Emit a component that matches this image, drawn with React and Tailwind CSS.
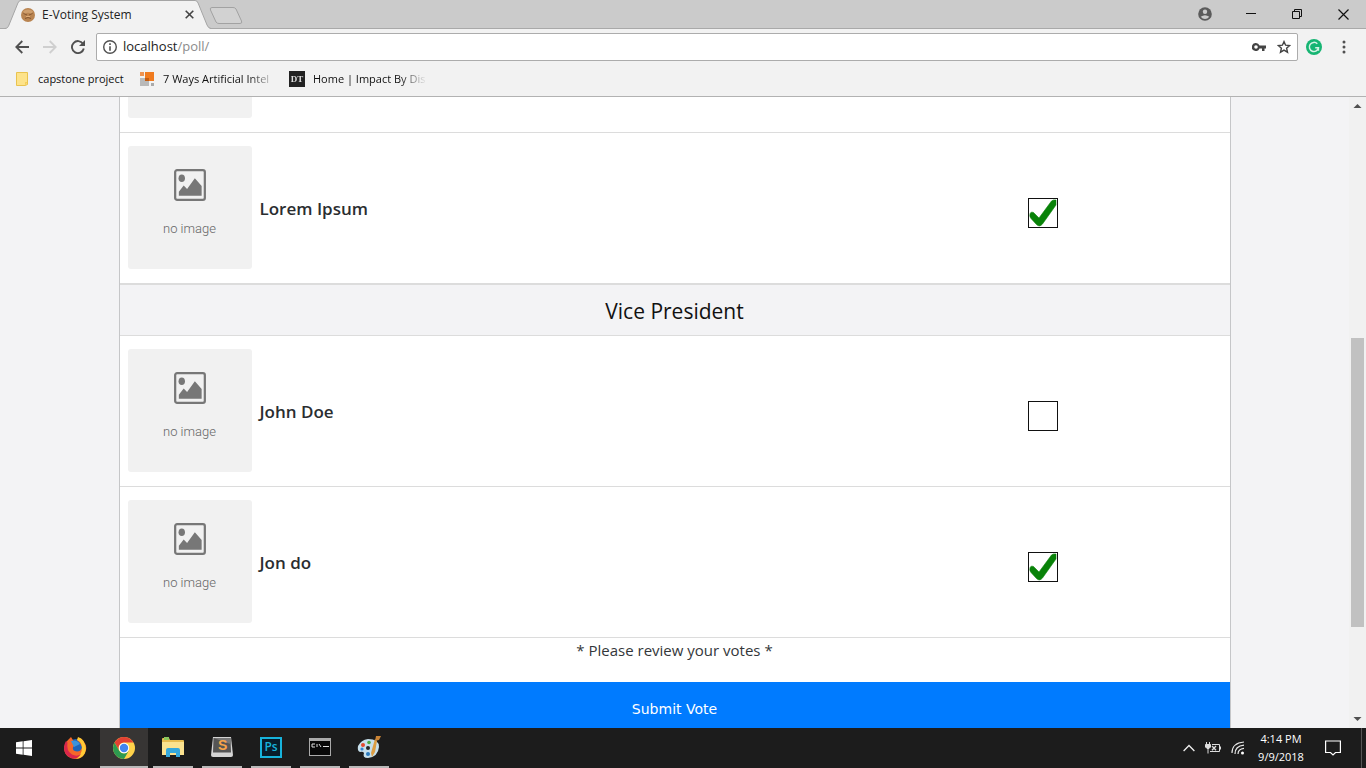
import React, { useState } from "react";

const presidents = [{ name: "Lorem Ipsum", checked: true }];
const vicePresidents = [
  { name: "John Doe", checked: false },
  { name: "Jon do", checked: true },
];

function TabStrip() {
  return (
    <header className="flex h-[29px] shrink-0 items-stretch border-b border-[#a9a9a9] bg-[#cbcbcb]">
      <div className="relative -mb-px ml-[5px] flex w-[206px] items-center pl-4 pr-[17px]">
        <svg className="absolute inset-0 h-full w-full" viewBox="0 0 207 29" preserveAspectRatio="none" aria-hidden="true">
          <path d="M0 29C3 28 3 27 4 25L13 3Q14 .5 16 .5H191Q193 .5 194 3L203 25Q204 28 207 29Z" fill="#f2f2f2" />
          <path d="M0 28.5C3 28 3 27 4 25L13 3Q14 .5 16 .5H191Q193 .5 194 3L203 25Q204 28 207 28.5" fill="none" stroke="#a5a5a5" />
        </svg>
        <svg className="relative h-[14px] w-[14px] shrink-0" viewBox="0 0 14 14" aria-hidden="true">
          <circle cx="7" cy="7" r="7" fill="#b98450" />
          <path d="M2 3Q7 0 12 3L10.5 6Q7 3.500 3.500 6Z" fill="#cf9f6d" />
          <path d="M2.500 5.500 6 7M11.500 5.500 8 7M4 10.500Q7 8.500 10 10.500" stroke="#855630" fill="none" />
          <path d="M5 8.500H9" stroke="#e0ac77" />
        </svg>
        <span className="relative ml-[7px] flex-1 whitespace-nowrap text-xs text-[#222]">E-Voting System</span>
        <button aria-label="Close tab" className="relative">
          <svg className="h-[9px] w-[9px]" viewBox="0 0 9 9"><path d="M.7.700 8.300 8.300M8.300.700.700 8.300" stroke="#444" strokeWidth="1.600" /></svg>
        </button>
      </div>
      <button aria-label="New tab" className="-ml-0.5 mt-0.5 self-center">
        <svg className="h-[19px] w-[34px]" viewBox="0 0 34 19">
          <path d="M3 1.500H24Q26 1.500 27 3L32.500 15Q33.500 17.500 31 17.500H10Q8 17.500 7 16L1.500 4Q.5 1.500 3 1.500Z" fill="#d2d2d2" stroke="#a2a2a2" />
        </svg>
      </button>
      <div className="ml-auto flex items-center">
        <button aria-label="Profile" className="flex w-[46px] justify-center">
          <svg className="h-[14px] w-[14px]" viewBox="0 0 14 14">
            <circle cx="7" cy="7" r="6.800" fill="#5b5b5b" />
            <circle cx="7" cy="4.700" r="2.200" fill="#cbcbcb" />
            <path d="M2.700 9.700Q7 6.700 11.300 9.700Q9.500 12 7 12T2.700 9.700Z" fill="#cbcbcb" />
          </svg>
        </button>
        <button aria-label="Minimize" className="flex w-[46px] justify-center">
          <svg className="h-[10px] w-[10px]" viewBox="0 0 10 10"><path d="M0 4.500H10" stroke="#111" /></svg>
        </button>
        <button aria-label="Restore" className="flex w-[46px] justify-center">
          <svg className="h-[10px] w-[10px]" viewBox="0 0 10 10" fill="none" stroke="#111"><path d="M.5 2.500H7.500V9.500H.5ZM2.500 2.500V.5H9.500V7.500H7.500" /></svg>
        </button>
        <button aria-label="Close" className="flex w-[46px] justify-center">
          <svg className="h-[11px] w-[11px]" viewBox="0 0 11 11"><path d="M.5.500 10.500 10.500M10.500.500.500 10.500" stroke="#111" strokeWidth="1.200" /></svg>
        </button>
      </div>
    </header>
  );
}

function Toolbar() {
  return (
    <div className="flex h-[36px] shrink-0 items-center bg-[#f2f2f2] pl-[15px] pr-[20px]">
      <button aria-label="Back">
        <svg className="h-[14px] w-[14px]" viewBox="0 0 14 14" fill="none" stroke="#505050" strokeWidth="1.800"><path d="M14 7H1.500M7.300 1 1.300 7 7.300 13" /></svg>
      </button>
      <button aria-label="Forward" className="ml-[14px]">
        <svg className="h-[14px] w-[14px]" viewBox="0 0 14 14" fill="none" stroke="#cfcfcf" strokeWidth="1.800"><path d="M0 7H12.500M6.700 1 12.700 7 6.700 13" /></svg>
      </button>
      <button aria-label="Reload" className="ml-[14px]">
        <svg className="h-[14px] w-[14px]" viewBox="0 0 14 14"><path d="M12 3.800A6 6 0 1 0 12.800 8.500" fill="none" stroke="#505050" strokeWidth="1.900" /><path d="M14 0V6H8Z" fill="#505050" /></svg>
      </button>
      <div className="ml-[11px] flex h-7 flex-1 items-center rounded-[2px] border border-[#acacac] bg-white pl-[6px] pr-[6px]">
        <svg className="h-[14px] w-[14px] shrink-0" viewBox="0 0 14 14"><circle cx="7" cy="7" r="6.300" fill="none" stroke="#505050" strokeWidth="1.400" /><path d="M7 3.200V4.900M7 6.200V10.800" stroke="#505050" strokeWidth="1.600" /></svg>
        <a href="#poll" className="ml-[6px] flex-1 text-[13px] text-[#8b8b8b]"><span className="text-[#222]">localhost</span>/poll/</a>
        <button aria-label="Saved password">
          <svg className="h-2 w-[14px]" viewBox="0 0 14 8"><path d="M4 0A4 4 0 1 0 7.500 5.500H10V8H12.500V5.500H14V2.500H7.500A4 4 0 0 0 4 0ZM4 2.200A1.800 1.800 0 1 1 4 5.800A1.800 1.800 0 0 1 4 2.200Z" fill="#444" fillRule="evenodd" /></svg>
        </button>
        <button aria-label="Bookmark" className="ml-[11px]">
          <svg className="h-[14px] w-[14px]" viewBox="0 0 14 14"><path d="M7 1.600 8.600 5.200 12.600 5.600 9.600 8.200 10.500 12.200 7 10.100 3.500 12.200 4.400 8.200 1.400 5.600 5.400 5.200Z" fill="none" stroke="#444" strokeWidth="1.400" /></svg>
        </button>
      </div>
      <button aria-label="Grammarly" className="ml-[8px]">
        <svg className="h-4 w-4" viewBox="0 0 16 16"><circle cx="8" cy="8" r="8" fill="#16b573" /><path d="M11.300 4.800A4.600 4.600 0 1 0 12.500 8.700H9.200M12.400 8.700V11.800" fill="none" stroke="#d5f3e5" strokeWidth="1.500" /></svg>
      </button>
      <button aria-label="Menu" className="ml-[20px]">
        <svg className="h-[14px] w-1" viewBox="0 0 4 14" fill="#505050"><circle cx="2" cy="2" r="1.500" /><circle cx="2" cy="7" r="1.500" /><circle cx="2" cy="12" r="1.500" /></svg>
      </button>
    </div>
  );
}

function Bookmarks() {
  return (
    <nav className="flex h-8 shrink-0 items-center border-b border-[#b2b2b2] bg-[#f2f2f2] pb-[3px] pl-[16px] text-[11px] text-[#111]">
      <a href="#capstone" className="flex w-[111px] items-center gap-[10px] whitespace-nowrap">
        <svg className="h-[14px] w-3 shrink-0" viewBox="0 0 12 14"><path d="M.5.500H11.500V12.500L9 13.500H.5Z" fill="#fde38b" stroke="#e9c34f" /><path d="M9 13.500V10H11.500" fill="#f5cf5c" /></svg>
        capstone project
      </a>
      <a href="#ways" className="ml-[13px] flex w-[136px] items-center gap-[9px] whitespace-nowrap [mask-image:linear-gradient(to_right,black_80%,transparent)]">
        <svg className="h-[14px] w-[14px] shrink-0" viewBox="0 0 14 14"><path d="M0 0H4V4H0Z" fill="#ee9350" /><path d="M0 6H9V14H0Z" fill="#b9b9b9" /><path d="M5 0H14V9H5Z" fill="#f07b1f" /><path d="M5 6H9V9H5Z" fill="#c55c10" /><path d="M11 11H14V14H11Z" fill="#aaa" /></svg>
        7 Ways Artificial Intel
      </a>
      <a href="#impact" className="ml-[13px] flex w-[138px] items-center gap-[8px] whitespace-nowrap [mask-image:linear-gradient(to_right,black_80%,transparent)]">
        <span className="flex h-4 w-4 shrink-0 items-center justify-center bg-[#222] font-['Liberation_Serif',serif] text-[9px] font-bold leading-4 text-[#ddd]">DT</span>
        Home | Impact By Dis
      </a>
    </nav>
  );
}

function NoImage() {
  return (
    <div className="flex h-[123px] w-[124px] flex-col items-center rounded-[3px] bg-[#f1f1f1] pt-[23px] text-[#777]">
      <svg className="h-8 w-8" viewBox="0 0 33 33">
        <rect x="1.200" y="1.200" width="30.600" height="30.600" rx="2" fill="none" stroke="currentColor" strokeWidth="2.300" />
        <ellipse cx="8" cy="9.500" rx="3.300" ry="3.900" fill="currentColor" />
        <path d="M5 27.500V23.500L10 17 13.500 20.500 21.500 9.500 28.500 17.500V27.500Z" fill="currentColor" />
      </svg>
      <span className="mt-[18px] font-['Roboto',sans-serif] text-[13px] font-light leading-5 text-[#666]">no image</span>
    </div>
  );
}

function Candidate({ name, checked }) {
  const [on, setOn] = useState(checked);
  const id = "vote-" + name.toLowerCase().replace(" ", "-");
  return (
    <tr className="border-b border-[#dcdcdc]">
      <td className="w-[132px] pb-[14px] pl-2 pt-[13px]"><NoImage /></td>
      <td className="pl-2 pt-0.5 text-[17px] font-semibold leading-6 text-[#2a2d30]"><label htmlFor={id}>{name}</label></td>
      <td className="w-[374px] pt-[9px]">
        <span className="relative mx-auto block h-[30px] w-[30px]">
          <input id={id} type="checkbox" checked={on} onChange={(e) => setOn(e.target.checked)} className="peer block h-full w-full appearance-none border border-[#111] bg-white" />
          <svg className="pointer-events-none absolute inset-0 hidden h-full w-full peer-checked:block" viewBox="0 0 30 30" aria-hidden="true">
            <path d="M1.800 17.500Q2 13 5.500 14.500L11 20 23.500 3Q25 1.500 28 2V7L14.500 26Q11.500 29.500 8.500 26.500L3 20.500Q1.800 19 1.800 17.500Z" fill="#088208" stroke="#088208" strokeWidth=".6" />
          </svg>
        </span>
      </td>
    </tr>
  );
}

function Poll() {
  return (
    <main className="min-w-0 flex-1 overflow-hidden bg-[#f3f3f5]">
      <form onSubmit={(e) => e.preventDefault()} className="mx-auto max-w-[1112px] border-x border-[#c5c6c8] bg-white">
        <div className="border-b border-[#dcdcdc] pb-[14px] pl-2">
          <div className="h-[21px] w-[124px] rounded-b-[3px] bg-[#f1f1f1]" />
        </div>
        <table className="w-full border-collapse">
          <tbody>{presidents.map((r) => <Candidate key={r.name} {...r} />)}</tbody>
        </table>
        <h2 className="border-y border-[#dcdcdc] bg-[#f3f3f5] pb-[8px] pt-[10px] text-center text-[21px] leading-8 text-[#111]">Vice President</h2>
        <table className="w-full border-collapse">
          <tbody>{vicePresidents.map((r) => <Candidate key={r.name} {...r} />)}</tbody>
        </table>
        <p className="pb-5 text-center text-[15px] leading-6 text-[#34373a]">* Please review your votes *</p>
        <button type="submit" className="block w-full bg-[#007bff] pb-4 pt-[15px] font-['DejaVu_Sans',sans-serif] text-sm leading-6 text-white">Submit Vote</button>
      </form>
    </main>
  );
}

function ScrollBar() {
  return (
    <div className="flex w-[17px] shrink-0 flex-col items-center bg-[#f1f1f1]" aria-hidden="true">
      <svg className="h-[17px] w-[17px]" viewBox="0 0 17 17"><path d="M4.500 11 8.500 7 12.500 11Z" fill="#505050" /></svg>
      <div className="flex-[224]" />
      <div className="w-[13px] flex-[289] bg-[#c1c1c1]" />
      <div className="flex-[84]" />
      <svg className="h-[17px] w-[17px]" viewBox="0 0 17 17"><path d="M4.500 6 8.500 10 12.500 6Z" fill="#505050" /></svg>
    </div>
  );
}

function Task({ label, line, active, children }) {
  return (
    <button aria-label={label} className={"flex h-10 w-12 flex-col items-center " + (active ? "bg-[#373534]" : "")}>
      <span className="flex w-full flex-1 items-center justify-center">{children}</span>
      {line && <span className={"h-[2px] shrink-0 bg-[#b9b9b9] " + (active ? "w-full" : "w-10")} />}
    </button>
  );
}

function TaskBar() {
  return (
    <footer className="flex h-10 shrink-0 items-center bg-[#1c1c1c] text-white">
      <Task label="Start">
        <svg className="h-4 w-4" viewBox="0 0 16 16"><path d="M0 2.300 6.700 1.300V7.600H0ZM7.500 1.200 16 0V7.600H7.500ZM0 8.400H6.700V14.700L0 13.700ZM7.500 8.400H16V16L7.500 14.800Z" fill="#fff" /></svg>
      </Task>
      <div className="ml-[3px] flex gap-px">
        <Task label="Firefox">
          <svg className="h-6 w-6" viewBox="0 0 24 24">
            <circle cx="12.500" cy="12" r="9" fill="#1d64b8" />
            <path d="M5 4 8 1 10.500 5Q14 5 14 8L10 11Q9 15 14 15.500 18 15.500 19 11 17 6 14 4 18 0 21 6 24 10 23 14 21 23 12 23 2 22 1 13 1 8 5 4Z" fill="#f4672a" />
            <path d="M15 1Q22 3 23 13 22 22 13 23 19 18 19 12 19 6 14 4Z" fill="#ffca35" />
            <path d="M3 5 4.500 6.500Q3 15 9 18.500 14 21 18 18 14 24 8 22 1 19 1 12 1 8 3 5Z" fill="#d9264b" />
            <path d="M8 5Q14 3 17 8L15 9 11 11Z" fill="#3b93dc" />
          </svg>
        </Task>
        <Task label="Chrome" line active>
          <svg className="mt-[2px] h-[22px] w-[22px]" viewBox="0 0 22 22">
            <circle cx="11" cy="11" r="11" fill="#ffd24a" />
            <path d="M1.500 5.500A11 11 0 0 1 20.500 5.500H11A5.500 5.500 0 0 0 6.200 13.700Z" fill="#e34133" />
            <path d="M1.500 5.500 6.200 13.700A5.500 5.500 0 0 0 15.800 13.700L11 22A11 11 0 0 1 1.500 5.500Z" fill="#2d9a50" />
            <circle cx="11" cy="11" r="5.200" fill="#fff" /><circle cx="11" cy="11" r="4.200" fill="#4385ee" />
          </svg>
        </Task>
        <Task label="File Explorer" line>
          <svg className="h-5 w-[22px]" viewBox="0 0 22 20">
            <path d="M0 2Q0 1 1 1H7L8 3H21Q22 3 22 4V18H0Z" fill="#e8bd50" /><path d="M2 0H7V3H2Z" fill="#8bc65c" /><path d="M0 5H22V18H0Z" fill="#fbe28f" /><path d="M4 20V13Q4 11 6 11H16Q18 11 18 13V20H14V16H8V20Z" fill="#35a8dc" />
          </svg>
        </Task>
        <Task label="Sublime Text" line>
          <svg className="h-[22px] w-6" viewBox="0 0 24 22"><path d="M3 1H21L23 19Q23 21 21 21H3Q1 21 1 19Z" fill="#d4d4d4" /><path d="M3.500 2H20.500L21 16.500H3Z" fill="#555" /><path d="M3.500 2H20.500V8Z" fill="#777" /><text x="8" y="14" fontFamily="Liberation Sans" fontWeight="bold" fontSize="14" fill="#f6a34a">S</text></svg>
        </Task>
        <Task label="Photoshop" line>
          <span className="flex h-[21px] w-[22px] items-center justify-center border-2 border-[#17b3dc] bg-[#081d2b] text-[12px] font-semibold leading-none text-[#17b3dc]">Ps</span>
        </Task>
        <Task label="Command Prompt" line>
          <svg className="h-5 w-[22px]" viewBox="0 0 22 20"><path d="M0 1H22V19H0Z" fill="#aaa" /><path d="M1 4H21V18H1Z" fill="#080808" /><path d="M3 7H6M3 7V10H6M8 7V10M10 7 12 10M14 9.500H20" stroke="#ddd" fill="none" /></svg>
        </Task>
        <Task label="Paint" line>
          <svg className="h-6 w-6" viewBox="0 0 24 24">
            <path d="M11 4Q22 4 22 12 21 22 11 23 5 23 7 18 6 16 3 17 0 16 1 11 4 5 11 4Z" fill="#c6dfeb" />
            <circle cx="6" cy="10" r="2" fill="#e4492f" /><circle cx="12" cy="7.500" r="1.800" fill="#4caa44" /><circle cx="5" cy="14" r="1.600" fill="#3684d1" /><circle cx="11" cy="13" r="2" fill="#252525" /><circle cx="11" cy="19" r="2" fill="#2979bd" />
            <path d="M20 6 18 4 14 18 15 22 18 17Z" fill="#dc9d42" /><path d="M19 1 24 1 22 5 18 6Z" fill="#c98436" />
          </svg>
        </Task>
      </div>
      <div className="ml-auto flex h-full items-center">
        <button aria-label="Show hidden icons">
          <svg className="h-2 w-3" viewBox="0 0 12 8"><path d="M.6 7 6 1.500 11.400 7" fill="none" stroke="#eee" strokeWidth="1.300" /></svg>
        </button>
        <svg className="ml-[10px] h-3 w-4" viewBox="0 0 16 12" fill="none" stroke="#ddd" aria-label="Battery"><path d="M1.500 0V2.500M4.500 0V2.500M3 6V11.500M7 2.500H14.500V9.500H5M15.500 4.500V7.500" /><path d="M.5 2.500H5.500V5L4 6.500H2L.5 5Z" fill="#ddd" /><path d="M7 4 11 8.300M11 4 7 8.300" strokeWidth="1.300" /></svg>
        <svg className="ml-[10px] h-[14px] w-[14px]" viewBox="0 0 14 14" fill="none" stroke="#e8e8e8" strokeWidth="1.200" aria-label="Wi-Fi"><path d="M1 12Q1 2 13 1M4 13Q4 5 13 4.200M7 13Q7 8 13 7.300" /><circle cx="11.500" cy="12" r="1.500" fill="#fff" stroke="none" /></svg>
        <time className="ml-[11px] w-[50px] whitespace-nowrap text-center text-[11px] leading-[18px]">4:14 PM<br />9/9/2018</time>
        <button aria-label="Notifications" className="ml-[19px]">
          <svg className="h-4 w-4" viewBox="0 0 16 16"><path d="M.6 1H15.400V12.500H10.500L8 15 5.500 12.500H.6Z" fill="none" stroke="#fff" strokeWidth="1.200" /></svg>
        </button>
        <span className="ml-[20px] mr-1 h-full w-px bg-[#555]" />
      </div>
    </footer>
  );
}

export default function App() {
  return (
    <div className="flex h-screen flex-col overflow-hidden bg-[#f3f3f5] font-['Open_Sans','Noto_Sans',sans-serif]">
      <TabStrip />
      <Toolbar />
      <Bookmarks />
      <div className="flex min-h-0 flex-1">
        <Poll />
        <ScrollBar />
      </div>
      <TaskBar />
    </div>
  );
}
